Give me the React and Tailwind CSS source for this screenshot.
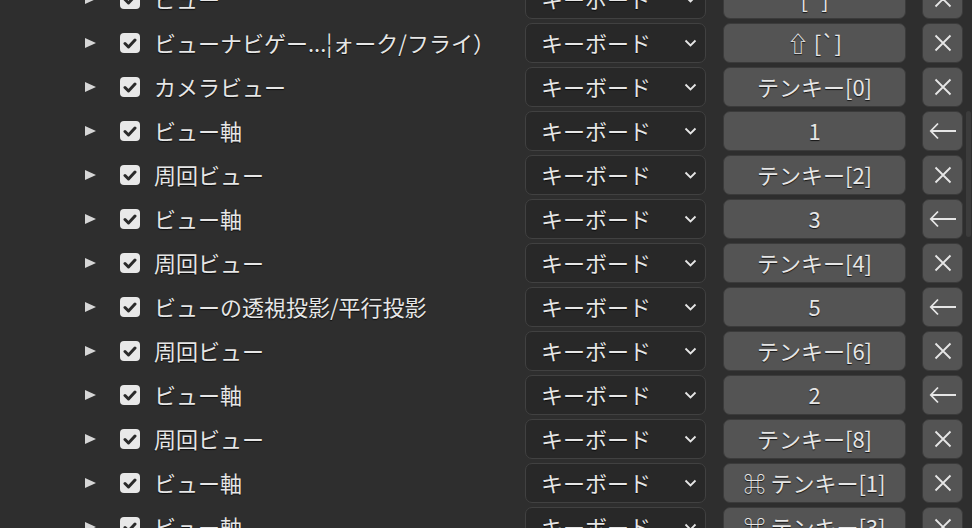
import React from 'react'

const rows = [
  { label: 'ビュー', key: '[`]', icon: 'x' },
  { label: 'ビューナビゲー...¦ォーク/フライ）', key: '⇧ [`]', icon: 'x' },
  { label: 'カメラビュー', key: 'テンキー[0]', icon: 'x' },
  { label: 'ビュー軸', key: '1', icon: 'back' },
  { label: '周回ビュー', key: 'テンキー[2]', icon: 'x' },
  { label: 'ビュー軸', key: '3', icon: 'back' },
  { label: '周回ビュー', key: 'テンキー[4]', icon: 'x' },
  { label: 'ビューの透視投影/平行投影', key: '5', icon: 'back' },
  { label: '周回ビュー', key: 'テンキー[6]', icon: 'x' },
  { label: 'ビュー軸', key: '2', icon: 'back' },
  { label: '周回ビュー', key: 'テンキー[8]', icon: 'x' },
  { label: 'ビュー軸', key: '⌘ テンキー[1]', icon: 'x' },
  { label: 'ビュー軸', key: '⌘ テンキー[3]', icon: 'x' },
]

const shadow = '[text-shadow:0_1px_1px_rgba(0,0,0,0.75)]'

function Row({ label, keyName, icon }) {
  return (
    <div className="flex h-[44px] items-center">
      {/* disclosure triangle */}
      <svg className="ml-[85px] shrink-0" width="11" height="10" viewBox="0 0 11 10">
        <polygon points="0,0 11,5 0,10" fill="#d6d6d6" />
      </svg>

      {/* checkbox */}
      <div className="ml-[24px] flex h-[20px] w-[20px] shrink-0 items-center justify-center rounded-[4px] bg-[#e8e8e8]">
        <svg width="14" height="11" viewBox="0 0 14 11">
          <path d="M2 5.5 L5.5 9 L12 2" fill="none" stroke="#2a2a2a" strokeWidth="3" strokeLinecap="round" strokeLinejoin="round" />
        </svg>
      </div>

      <div className={`ml-[14px] w-[371px] shrink-0 whitespace-nowrap pb-[3px] text-[22px] leading-none text-[#e6e6e6] ${shadow}`}>
        {label}
      </div>

      {/* event type dropdown */}
      <div className="flex h-[40px] w-[181px] shrink-0 items-center justify-between rounded-[7px] border border-[#414141] bg-[#282828] pl-[15px] pr-[8px]">
        <span className={`pb-[3px] text-[22px] leading-none text-[#e6e6e6] ${shadow}`}>キーボード</span>
        <svg width="13" height="8" viewBox="0 0 13 8">
          <path d="M1.5 1.5 L6.5 6.5 L11.5 1.5" fill="none" stroke="#e6e6e6" strokeWidth="1.8" />
        </svg>
      </div>

      {/* key button */}
      <div className={`ml-[17px] flex h-[40px] w-[183px] shrink-0 items-center justify-center rounded-[7px] border border-[#3b3b3b] bg-[#545454] pb-[3px] text-[22px] leading-none text-[#e6e6e6] ${shadow}`}>
        {keyName}
      </div>

      {/* remove / restore */}
      <div className="ml-[16px] flex h-[40px] w-[41px] shrink-0 items-center justify-center rounded-[7px] border border-[#3b3b3b] bg-[#545454]">
        {icon === 'x' ? (
          <svg width="18" height="18" viewBox="0 0 18 18">
            <path d="M1.5 1.5 L16.5 16.5 M16.5 1.5 L1.5 16.5" stroke="#e6e6e6" strokeWidth="1.8" />
          </svg>
        ) : (
          <svg width="28" height="18" viewBox="0 0 28 18">
            <path d="M9 1.5 L1.8 9 L9 16.5 M1.8 9 L27 9" fill="none" stroke="#e6e6e6" strokeWidth="1.8" />
          </svg>
        )}
      </div>
    </div>
  )
}

export default function App() {
  return (
    <div
      className="relative h-[528px] w-[972px] overflow-hidden bg-[#2e2e2e]"
      style={{ fontFamily: '"Noto Sans CJK JP", "Noto Sans", sans-serif' }}
    >
      <div className="-mt-[23px] flex flex-col">
        {rows.map((r, i) => (
          <Row key={i} label={r.label} keyName={r.key} icon={r.icon} />
        ))}
      </div>

      {/* scrollbar */}
      <div className="absolute left-[966px] top-[111px] h-[126px] w-[5px] rounded-full bg-[#3c3c3c]" />
    </div>
  )
}
